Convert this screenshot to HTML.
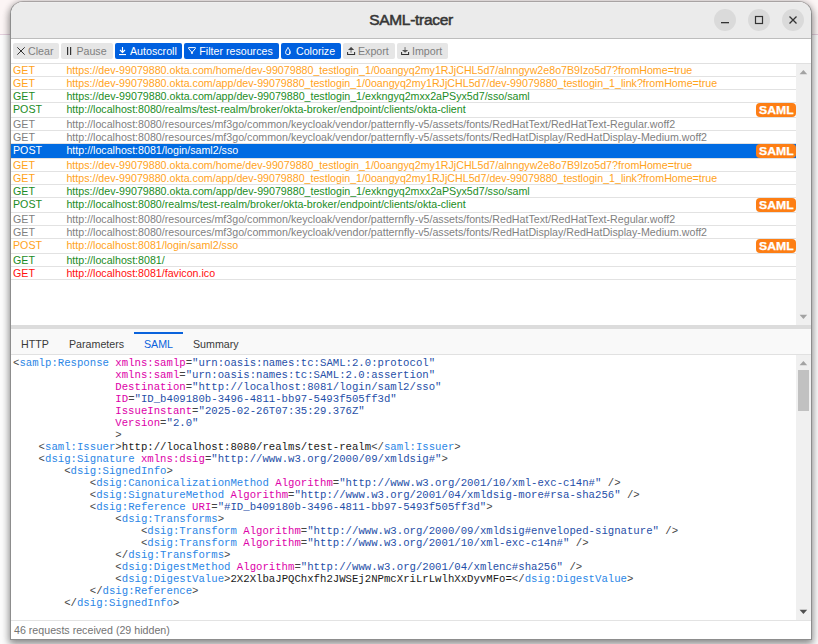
<!DOCTYPE html>
<html><head><meta charset="utf-8"><style>
html,body{margin:0;padding:0;}
body{width:818px;height:644px;overflow:hidden;position:relative;background:#fbfbfb;font-family:"Liberation Sans",sans-serif;}
.bgtop{position:absolute;left:0;top:0;width:818px;height:34px;background:#fcf5f5;}
.bgline{position:absolute;left:0;top:34px;width:818px;height:1px;background:#e3cfdc;}
.win{position:absolute;left:10px;top:1px;width:800px;height:637px;border:1px solid #8d8d8d;border-top-color:#a8a3a3;border-radius:13px 13px 0 0;background:#fff;box-shadow:0 2px 7px 1px rgba(0,0,0,0.32),0 5px 9px rgba(0,0,0,0.2);overflow:hidden;}
.title{position:absolute;left:0;top:0;width:800px;height:36px;background:#ebebeb;border-bottom:1px solid #bdbdbd;border-top:0;}
.title .hl{position:absolute;left:0;top:0;width:800px;height:1px;background:#efefef;}
.ttext{position:absolute;left:0;top:9px;width:800px;text-align:center;font-weight:normal;font-size:15.5px;letter-spacing:-0.3px;color:#363636;-webkit-text-stroke:0.55px #363636;line-height:18px;}
.wbtn{position:absolute;top:7px;width:22px;height:22px;border-radius:50%;background:#dadada;}
.abs{position:absolute;}
.tb{position:absolute;top:43px;height:16px;border-radius:2px;background:#e6e6e6;color:#7f7f7f;font-size:10.667px;line-height:16px;white-space:nowrap;}
.tb.on{background:#0060df;color:#fff;}
.tb svg{position:absolute;}
.tb span{position:absolute;top:0;}
.list{position:absolute;left:11px;top:64px;width:785px;height:261px;}
.row{position:relative;height:12px;border-bottom:1px solid #e2e2e2;font-size:10.667px;line-height:12px;white-space:nowrap;}
.row.saml{height:14px;}
.row.sel{background:#006be2;}
.row .m{position:absolute;left:2px;top:0;}
.row .u{position:absolute;left:55.4px;top:0;}
.badge{position:absolute;left:745px;top:0;width:40px;height:14px;border-radius:4px;background:#fd7e14;color:#fff;font-family:"Liberation Sans",sans-serif;font-weight:bold;font-size:11px;line-height:14px;text-align:left;}
.badge b{position:absolute;left:2.8px;top:0;transform:scaleX(1.11);transform-origin:0 0;-webkit-text-stroke:0.25px #fff;}
.sb{position:absolute;left:796px;width:15px;background:#f0f0f0;}
.tri{position:absolute;width:0;height:0;border-left:3.5px solid transparent;border-right:3.5px solid transparent;}
.splitter{position:absolute;left:11px;top:325px;width:800px;height:4px;background:#dcdcdc;}
.tabs{position:absolute;left:11px;top:329px;width:800px;height:25px;background:#f9f9f9;border-bottom:1px solid #e1e1e1;}
.tab{position:absolute;top:0;height:25px;font-size:10.667px;line-height:31px;color:#3a3a3a;white-space:nowrap;}
.tab.act{color:#0a63dc;}
.tabul{position:absolute;top:3px;height:2px;background:#0a63dc;}
.code{position:absolute;left:13px;top:357px;width:784px;height:265px;overflow:hidden;}
pre{margin:0;font-family:"Liberation Mono",monospace;font-size:10.667px;line-height:12px;color:#222;}
i{font-style:normal;}
i.p{color:#444;}
i.t{color:#2b86e6;}
i.a{color:#dd00a9;}
i.v{color:#1f4fa8;}
i.x{color:#1a1a1a;}
.status{position:absolute;left:11px;top:620px;width:800px;height:18px;border-top:1px solid #e3e3e3;background:#fff;}
.stext{position:absolute;left:3px;top:2px;font-size:10.667px;line-height:14px;color:#737373;white-space:nowrap;}

</style></head><body>
<div class="bgtop"></div><div class="bgline"></div>
<div class="win">
 <div class="title"><div class="hl"></div>
  <div class="ttext">SAML-tracer</div>
  <div class="wbtn" style="left:703px"><svg width="22" height="22" viewBox="0 0 22 22"><rect x="7" y="13" width="8" height="1.3" fill="#333"/></svg></div>
  <div class="wbtn" style="left:737px"><svg width="22" height="22" viewBox="0 0 22 22"><rect x="7.5" y="7.5" width="7" height="7" fill="none" stroke="#333" stroke-width="1.2"/></svg></div>
  <div class="wbtn" style="left:771px"><svg width="22" height="22" viewBox="0 0 22 22"><path d="M7.5 7.5L14.5 14.5M14.5 7.5L7.5 14.5" stroke="#333" stroke-width="1.3"/></svg></div>
 </div>
</div>
<div class="tb" style="left:13px;width:46px"><svg style="left:4px;top:4px" width="8" height="8" viewBox="0 0 8 8"><path d="M0.3 0.3L7.7 7.7M7.7 0.3L0.3 7.7" stroke="#333" stroke-width="1"/></svg><span style="left:15px">Clear</span></div>
<div class="tb" style="left:61px;width:52px"><svg style="left:6px;top:4px" width="6" height="8" viewBox="0 0 6 8"><rect x="0" y="0" width="1.2" height="8" fill="#333"/><rect x="3" y="0" width="1.2" height="8" fill="#333"/></svg><span style="left:15.4px">Pause</span></div>
<div class="tb on" style="left:115px;width:67px"><svg style="left:4px;top:4px" width="8" height="9" viewBox="0 0 8 9"><path d="M3.5 0V5.6M1 3L3.5 5.5L6 3" stroke="#fff" stroke-width="1.1" fill="none"/><rect x="0" y="7" width="7" height="1.1" fill="#fff"/></svg><span style="left:15px">Autoscroll</span></div>
<div class="tb on" style="left:184px;width:95px"><svg style="left:4px;top:4px" width="9" height="9" viewBox="0 0 9 9"><path d="M0.6 0.6H7.4V1.5L4.4 5V6.6H3.6V5L0.6 1.5Z" stroke="#fff" stroke-width="1" fill="none" stroke-linejoin="round"/></svg><span style="left:15.3px">Filter resources</span></div>
<div class="tb on" style="left:281px;width:60px"><svg style="left:4px;top:4px" width="7" height="9" viewBox="0 0 7 9"><path d="M3 0.4C2.2 2.2 0.6 3.8 0.6 5.5C0.6 6.9 1.6 7.6 3 7.6C4.4 7.6 5.4 6.9 5.4 5.5C5.4 3.8 3.8 2.2 3 0.4Z" stroke="#fff" stroke-width="1" fill="none"/><path d="M4.2 3.6C4.8 4.5 5.1 5 5.1 5.8C5.1 6.8 4.4 7.3 3.6 7.3C4.2 6.4 4.3 5 4.2 3.6Z" fill="#fff"/></svg><span style="left:15px">Colorize</span></div>
<div class="tb" style="left:343px;width:52px"><svg style="left:4px;top:4px" width="9" height="9" viewBox="0 0 9 9"><path d="M0.6 4.9V7.4H7.6V4.9" stroke="#333" stroke-width="1.05" fill="none"/><path d="M1 3.1L4.1 -0.1L7.2 3.1Z" fill="#444"/><rect x="3.4" y="3" width="1.3" height="2.7" fill="#8a8a8a"/></svg><span style="left:15px">Export</span></div>
<div class="tb" style="left:397px;width:51px"><svg style="left:4px;top:4px" width="9" height="9" viewBox="0 0 9 9"><path d="M0.6 4.9V7.4H7.6V4.9" stroke="#333" stroke-width="1.05" fill="none"/><path d="M1 2.9L4.1 5.7L7.2 2.9Z" fill="#555"/><rect x="3.4" y="0.1" width="1.3" height="2.9" fill="#8a8a8a"/></svg><span style="left:15px">Import</span></div>
<div class="abs" style="left:11px;top:63px;width:800px;height:1px;background:#e0e0e0"></div>
<div class="list">
<div class="row" style="color:#ffa31c"><span class="m">GET</span><span class="u">https://dev-99079880.okta.com/home/dev-99079880_testlogin_1/0oangyq2my1RJjCHL5d7/alnngyw2e8o7B9Izo5d7?fromHome=true</span></div>
<div class="row" style="color:#ffa31c"><span class="m">GET</span><span class="u">https://dev-99079880.okta.com/app/dev-99079880_testlogin_1/0oangyq2my1RJjCHL5d7/dev-99079880_testlogin_1_link?fromHome=true</span></div>
<div class="row" style="color:#1b8c25"><span class="m">GET</span><span class="u">https://dev-99079880.okta.com/app/dev-99079880_testlogin_1/exkngyq2mxx2aPSyx5d7/sso/saml</span></div>
<div class="row saml" style="color:#1b8c25"><span class="m">POST</span><span class="u">http://localhost:8080/realms/test-realm/broker/okta-broker/endpoint/clients/okta-client</span><span class="badge"><b>SAML</b></span></div>
<div class="row" style="color:#7f7f7f"><span class="m">GET</span><span class="u">http://localhost:8080/resources/mf3go/common/keycloak/vendor/patternfly-v5/assets/fonts/RedHatText/RedHatText-Regular.woff2</span></div>
<div class="row" style="color:#7f7f7f"><span class="m">GET</span><span class="u">http://localhost:8080/resources/mf3go/common/keycloak/vendor/patternfly-v5/assets/fonts/RedHatDisplay/RedHatDisplay-Medium.woff2</span></div>
<div class="row saml sel" style="color:#fff"><span class="m">POST</span><span class="u">http://localhost:8081/login/saml2/sso</span><span class="badge"><b>SAML</b></span></div>
<div class="row" style="color:#ffa31c"><span class="m">GET</span><span class="u">https://dev-99079880.okta.com/home/dev-99079880_testlogin_1/0oangyq2my1RJjCHL5d7/alnngyw2e8o7B9Izo5d7?fromHome=true</span></div>
<div class="row" style="color:#ffa31c"><span class="m">GET</span><span class="u">https://dev-99079880.okta.com/app/dev-99079880_testlogin_1/0oangyq2my1RJjCHL5d7/dev-99079880_testlogin_1_link?fromHome=true</span></div>
<div class="row" style="color:#1b8c25"><span class="m">GET</span><span class="u">https://dev-99079880.okta.com/app/dev-99079880_testlogin_1/exkngyq2mxx2aPSyx5d7/sso/saml</span></div>
<div class="row saml" style="color:#1b8c25"><span class="m">POST</span><span class="u">http://localhost:8080/realms/test-realm/broker/okta-broker/endpoint/clients/okta-client</span><span class="badge"><b>SAML</b></span></div>
<div class="row" style="color:#7f7f7f"><span class="m">GET</span><span class="u">http://localhost:8080/resources/mf3go/common/keycloak/vendor/patternfly-v5/assets/fonts/RedHatText/RedHatText-Regular.woff2</span></div>
<div class="row" style="color:#7f7f7f"><span class="m">GET</span><span class="u">http://localhost:8080/resources/mf3go/common/keycloak/vendor/patternfly-v5/assets/fonts/RedHatDisplay/RedHatDisplay-Medium.woff2</span></div>
<div class="row saml" style="color:#ffa31c"><span class="m">POST</span><span class="u">http://localhost:8081/login/saml2/sso</span><span class="badge"><b>SAML</b></span></div>
<div class="row" style="color:#1b8c25"><span class="m">GET</span><span class="u">http://localhost:8081/</span></div>
<div class="row" style="color:#ff1010"><span class="m">GET</span><span class="u">http://localhost:8081/favicon.ico</span></div>
</div>
<div class="sb" style="top:64px;height:261px"><svg class="abs" style="left:3px;top:5px" width="9" height="6" viewBox="0 0 9 6"><path d="M0.6 5.2H8.2L4.4 0.9Z" fill="#a3a3a3"/></svg><svg class="abs" style="left:3px;top:250px" width="9" height="6" viewBox="0 0 9 6"><path d="M0.6 0.8H8.2L4.4 5.1Z" fill="#a3a3a3"/></svg></div>
<div class="splitter"></div>
<div class="tabs">
 <div class="tab" style="left:10px">HTTP</div>
 <div class="tab" style="left:58px">Parameters</div>
 <div class="tabul" style="left:123px;width:49px"></div>
 <div class="tab act" style="left:133px">SAML</div>
 <div class="tab" style="left:182px">Summary</div>
</div>
<div class="code"><pre><i class="p">&lt;</i><i class="t">samlp:Response</i> <i class="a">xmlns:samlp</i><i class="p">=</i><i class="v">&quot;urn:oasis:names:tc:SAML:2.0:protocol&quot;</i>
                <i class="a">xmlns:saml</i><i class="p">=</i><i class="v">&quot;urn:oasis:names:tc:SAML:2.0:assertion&quot;</i>
                <i class="a">Destination</i><i class="p">=</i><i class="v">&quot;http://localhost:8081/login/saml2/sso&quot;</i>
                <i class="a">ID</i><i class="p">=</i><i class="v">&quot;ID_b409180b-3496-4811-bb97-5493f505ff3d&quot;</i>
                <i class="a">IssueInstant</i><i class="p">=</i><i class="v">&quot;2025-02-26T07:35:29.376Z&quot;</i>
                <i class="a">Version</i><i class="p">=</i><i class="v">&quot;2.0&quot;</i>
                <i class="p">&gt;</i>
    <i class="p">&lt;</i><i class="t">saml:Issuer</i><i class="p">&gt;</i><i class="x">http://localhost:8080/realms/test-realm</i><i class="p">&lt;/</i><i class="t">saml:Issuer</i><i class="p">&gt;</i>
    <i class="p">&lt;</i><i class="t">dsig:Signature</i> <i class="a">xmlns:dsig</i><i class="p">=</i><i class="v">&quot;http://www.w3.org/2000/09/xmldsig#&quot;</i><i class="p">&gt;</i>
        <i class="p">&lt;</i><i class="t">dsig:SignedInfo</i><i class="p">&gt;</i>
            <i class="p">&lt;</i><i class="t">dsig:CanonicalizationMethod</i> <i class="a">Algorithm</i><i class="p">=</i><i class="v">&quot;http://www.w3.org/2001/10/xml-exc-c14n#&quot;</i><i class="p"> /&gt;</i>
            <i class="p">&lt;</i><i class="t">dsig:SignatureMethod</i> <i class="a">Algorithm</i><i class="p">=</i><i class="v">&quot;http://www.w3.org/2001/04/xmldsig-more#rsa-sha256&quot;</i><i class="p"> /&gt;</i>
            <i class="p">&lt;</i><i class="t">dsig:Reference</i> <i class="a">URI</i><i class="p">=</i><i class="v">&quot;#ID_b409180b-3496-4811-bb97-5493f505ff3d&quot;</i><i class="p">&gt;</i>
                <i class="p">&lt;</i><i class="t">dsig:Transforms</i><i class="p">&gt;</i>
                    <i class="p">&lt;</i><i class="t">dsig:Transform</i> <i class="a">Algorithm</i><i class="p">=</i><i class="v">&quot;http://www.w3.org/2000/09/xmldsig#enveloped-signature&quot;</i><i class="p"> /&gt;</i>
                    <i class="p">&lt;</i><i class="t">dsig:Transform</i> <i class="a">Algorithm</i><i class="p">=</i><i class="v">&quot;http://www.w3.org/2001/10/xml-exc-c14n#&quot;</i><i class="p"> /&gt;</i>
                <i class="p">&lt;/</i><i class="t">dsig:Transforms</i><i class="p">&gt;</i>
                <i class="p">&lt;</i><i class="t">dsig:DigestMethod</i> <i class="a">Algorithm</i><i class="p">=</i><i class="v">&quot;http://www.w3.org/2001/04/xmlenc#sha256&quot;</i><i class="p"> /&gt;</i>
                <i class="p">&lt;</i><i class="t">dsig:DigestValue</i><i class="p">&gt;</i><i class="x">2X2XlbaJPQChxfh2JWSEj2NPmcXriLrLwlhXxDyvMFo=</i><i class="p">&lt;/</i><i class="t">dsig:DigestValue</i><i class="p">&gt;</i>
            <i class="p">&lt;/</i><i class="t">dsig:Reference</i><i class="p">&gt;</i>
        <i class="p">&lt;/</i><i class="t">dsig:SignedInfo</i><i class="p">&gt;</i></pre></div>
<div class="sb" style="top:355px;height:265px"><svg class="abs" style="left:3px;top:5px" width="9" height="6" viewBox="0 0 9 6"><path d="M0.6 5.2H8.2L4.4 0.9Z" fill="#a3a3a3"/></svg><div class="abs" style="left:2px;top:15px;width:11px;height:41px;background:#c1c1c1"></div><svg class="abs" style="left:3px;top:254px" width="9" height="6" viewBox="0 0 9 6"><path d="M0.6 0.8H8.2L4.4 5.1Z" fill="#505050"/></svg></div>
<div class="status"><div class="stext">46 requests received (29 hidden)</div></div>

</body></html>
